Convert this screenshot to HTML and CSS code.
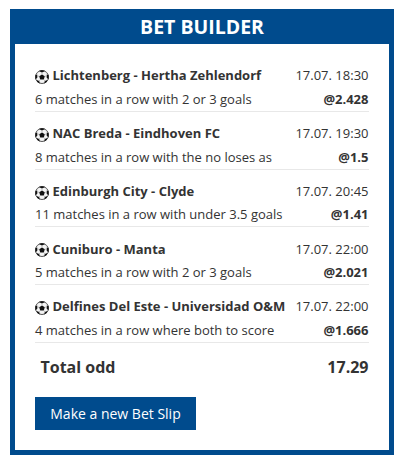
FILE: index.html
```html
<!DOCTYPE html>
<html lang="en">

<head>
    <meta charset="UTF-8" />
    <title>Bet Builder</title>
    <link rel="stylesheet" href="styles.css">
</head>

<body>
    <svg class="sprite" width="0" height="0">
        <symbol id="ball" viewBox="0 0 14 14">
            <circle cx="7" cy="7" r="6.5" fill="#f4f4f4" stroke="#555" stroke-width="1" />
            <path d="M7 4.4 L9.8 6.3 L8.8 9.5 H5.2 L4.2 6.3 Z" fill="#111" />
            <path d="M3.8 1 Q7 -0.4 10.2 1 L7 2.6 Z M13.6 5 V9.4 L11.6 7.4 L11.8 4.4 Z M0.4 5 V9.4 L2.4 7.4 L2.2 4.4 Z M9.2 13.4 L9.8 11.1 L12.5 10 L11.8 12.1 Z M4.8 13.4 L4.2 11.1 L1.5 10 L2.2 12.1 Z" fill="#111" />
            <path d="M7 2.5 V4.4 M9.8 6.3 L11.8 6 M8.8 9.5 L10 11.1 M5.2 9.5 L4 11.1 M4.2 6.3 L2.2 6" fill="none" stroke="#999" stroke-width="0.6" />
        </symbol>
    </svg>

    <div class="bet-builder">
        <h2>BET BUILDER</h2>
        <div class="content">
            <div class="match">
                <div class="line">
                    <span class="teams"><svg class="ball"><use href="#ball" /></svg>Lichtenberg - Hertha Zehlendorf</span>
                    <span>17.07. 18:30</span>
                </div>
                <div class="line">
                    <span>6 matches in a row with 2 or 3 goals</span>
                    <span class="odd">@2.428</span>
                </div>
            </div>
            <div class="match">
                <div class="line">
                    <span class="teams"><svg class="ball"><use href="#ball" /></svg>NAC Breda - Eindhoven FC</span>
                    <span>17.07. 19:30</span>
                </div>
                <div class="line">
                    <span>8 matches in a row with the no loses as</span>
                    <span class="odd">@1.5</span>
                </div>
            </div>
            <div class="match">
                <div class="line">
                    <span class="teams"><svg class="ball"><use href="#ball" /></svg>Edinburgh City - Clyde</span>
                    <span>17.07. 20:45</span>
                </div>
                <div class="line">
                    <span>11 matches in a row with under 3.5 goals</span>
                    <span class="odd">@1.41</span>
                </div>
            </div>
            <div class="match">
                <div class="line">
                    <span class="teams"><svg class="ball"><use href="#ball" /></svg>Cuniburo - Manta</span>
                    <span>17.07. 22:00</span>
                </div>
                <div class="line">
                    <span>5 matches in a row with 2 or 3 goals</span>
                    <span class="odd">@2.021</span>
                </div>
            </div>
            <div class="match">
                <div class="line">
                    <span class="teams"><svg class="ball"><use href="#ball" /></svg>Delfines Del Este - Universidad O&amp;M</span>
                    <span>17.07. 22:00</span>
                </div>
                <div class="line">
                    <span>4 matches in a row where both to score</span>
                    <span class="odd">@1.666</span>
                </div>
            </div>
            <div class="total">
                <span>Total odd</span>
                <span>17.29</span>
            </div>
            <button class="btn">Make a new Bet Slip</button>
        </div>
    </div>
</body>

</html>
```
FILE: styles.css
```css
* {
    box-sizing: border-box;
    margin: 0;
    padding: 0;
    font-family: "Open Sans", sans-serif;
}

body {
    padding: 9px 10px 12px;
    background: #fff;
    color: #333;
    font-size: 13px;
    line-height: 23.4px;
}

.sprite {
    display: none;
}

.bet-builder {
    height: 446px;
    border: 5px solid #004b8d;
    border-top: none;
}

h2 {
    height: 35px;
    background: #004b8d;
    color: #fff;
    font-size: 19.5px;
    font-weight: 700;
    line-height: 36px;
    text-align: center;
}

.content {
    padding: 10px 20px 20px;
}

.match {
    padding-top: 10.3px;
    border-bottom: 1px solid #e8e8e8;
}

.match .line:last-child {
    height: 23.1px;
}

.line {
    display: flex;
    justify-content: space-between;
    padding-right: 0.5px;
    white-space: nowrap;
}

.teams {
    display: flex;
    align-items: center;
    font-weight: 700;
}

.ball {
    width: 14px;
    height: 14px;
    margin: 2px 3.5px 0 0;
}

.odd {
    font-weight: 700;
}

.total {
    display: flex;
    justify-content: space-between;
    padding: 10px 0.5px 15px 5.5px;
    font-size: 16px;
    font-weight: 700;
    line-height: 29px;
}

.btn {
    display: block;
    width: 161px;
    height: 33px;
    border: none;
    background: #004b8d;
    color: #fff;
    font-size: 14px;
    cursor: pointer;
}
```
